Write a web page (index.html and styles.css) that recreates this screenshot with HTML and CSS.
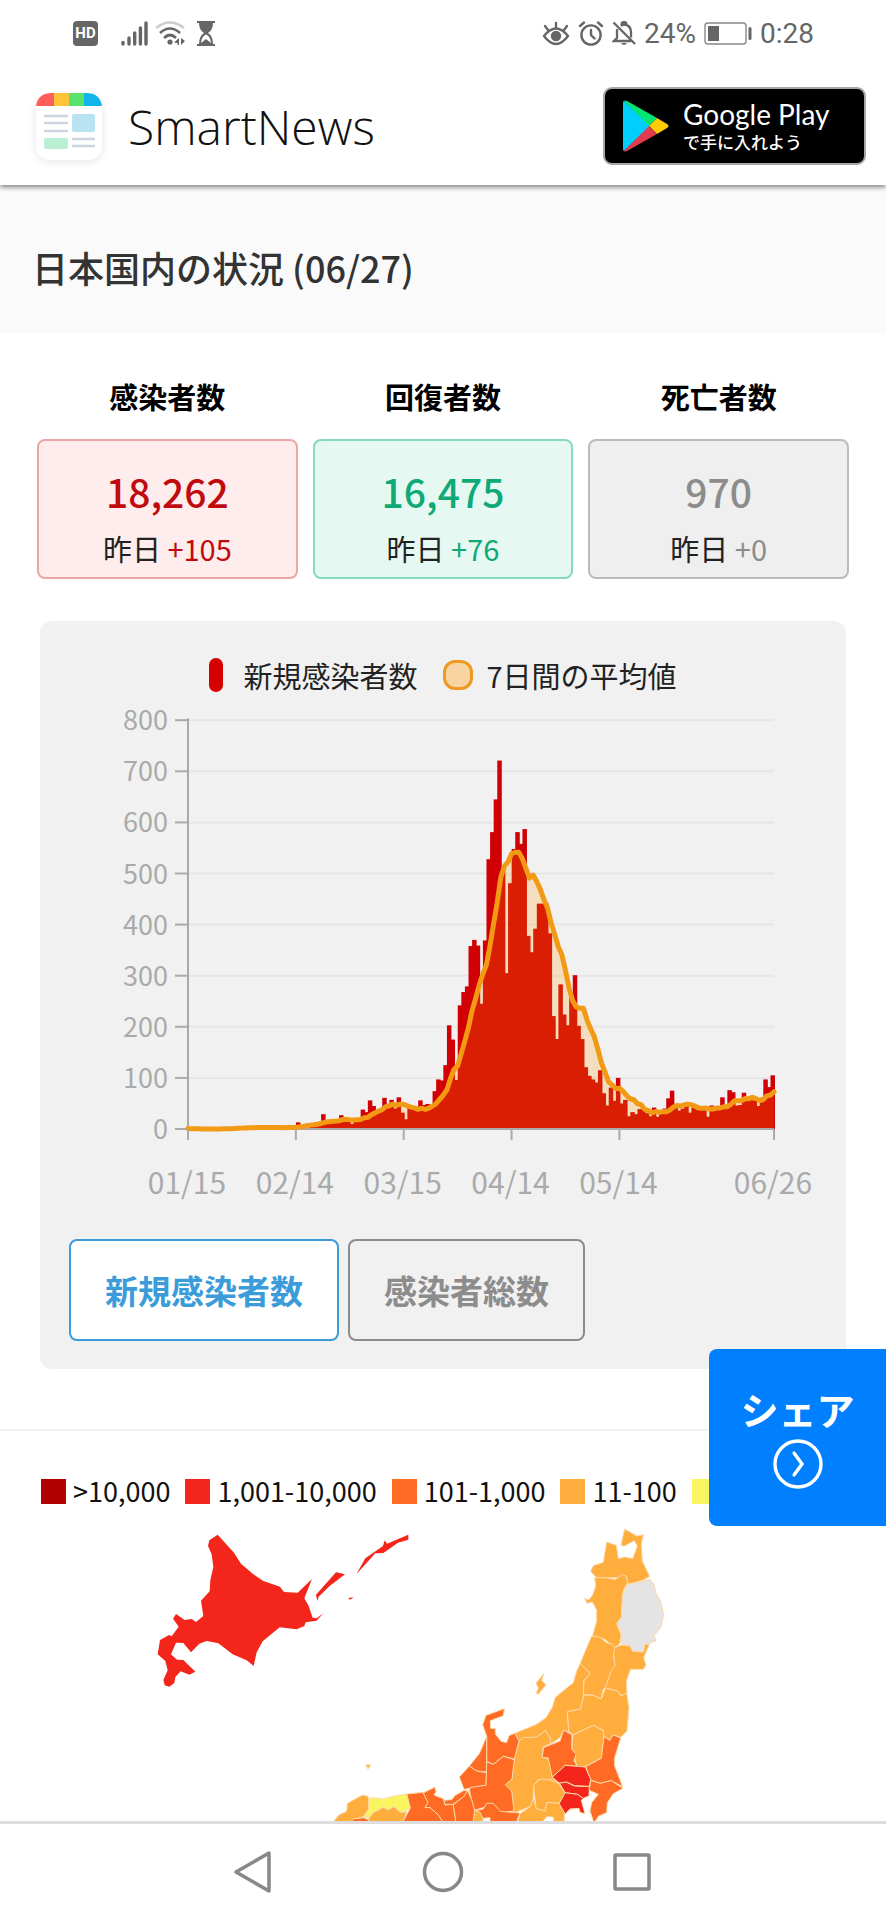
FILE: index.html
```html
<!DOCTYPE html>
<html lang="ja">
<head>
    <meta charset="UTF-8">
    <meta name="viewport" content="width=device-width, initial-scale=1.0">
    <title>SmartNews</title>
    <link rel="stylesheet" href="styles.css">
</head>
<body>
    <div class="status-bar">
        <div class="status-left">
            <span class="hd-icon">HD</span>
            <svg width="27" height="25" viewBox="0 0 27 25" stroke="#666" stroke-width="3.4" stroke-linecap="round">
                <path d="M2 21.5V23M8 17V23M13.7 12V23M19.4 7V23M25 2V23"/>
            </svg>
            <svg class="wifi" width="30" height="25" viewBox="0 0 30 25" fill="none" stroke="#666" stroke-width="2.6">
                <path stroke="#ccc" d="M1 7Q15-4 29 7"/>
                <path d="M5 12Q15 3 25 12M9 17Q15 11 21 17"/>
                <circle cx="15" cy="21" r="2.6" fill="#666" stroke="none"/>
                <path fill="#666" stroke="none" d="M24 17v7h-1.500v-2l-3.500-.5zM26 17v7l4-4z"/>
            </svg>
            <svg class="hourglass" width="20" height="25" viewBox="0 0 20 25">
                <path fill="#666" d="M1 0h18v2h-2q0 7-5 10q5 3 5 11h2v2H1v-2h2q0-8 5-11Q3 9 3 2H1z"/>
                <path fill="#fff" d="M10 13.500q4.500 2 5 8.500l-5-4-5 4q.5-6.500 5-8.500z"/>
            </svg>
        </div>
        <div class="status-right">
            <svg width="28" height="25" viewBox="0 0 28 25" fill="none" stroke="#666" stroke-width="2.400" stroke-linecap="round">
                <path d="M2 15Q14 0 26 15Q14 31 2 15zM14 2v4M3 5l3 4M25 5l-3 4"/>
                <circle cx="14" cy="15" r="4" fill="#666"/>
            </svg>
            <svg width="26" height="25" viewBox="0 0 26 25" fill="none" stroke="#666" stroke-width="2.400" stroke-linecap="round">
                <circle cx="13" cy="14" r="9.600"/>
                <path d="M13 9v5l3.500 3.500M2 5l4-3.500M24 5l-4-3.500"/>
            </svg>
            <svg width="24" height="25" viewBox="0 0 24 25" fill="none" stroke="#666" stroke-width="2.300">
                <path d="M1.500 1.500L23 23M5 8v9l-3 3h17M9 5q1.500-1.500 3-1.500 6.500.500 7 7v6M9.500 4q0-3 2.500-3t2.500 3"/>
                <path fill="#666" stroke="none" d="M9 22h6q-3 4-6 0z"/>
            </svg>
            <span>24%</span>
            <svg class="battery" width="48" height="23" viewBox="0 0 48 23">
                <rect x="1" y="1" width="41" height="21" rx="3" fill="none" stroke="#888" stroke-width="1.400"/>
                <path fill="#666" d="M4 4h11v15H4z"/>
                <rect x="44.500" y="5" width="3" height="13" rx="1.500" fill="#666"/>
            </svg>
            <span>0:28</span>
        </div>
    </div>

    <header class="site-header">
        <a href="#" class="brand">
            <span class="brand-icon">
                <svg width="66" height="67" viewBox="0 0 66 67">
                    <path fill="#ff5c5c" d="M18 0v13H0Q2 0 16 0z"/>
                    <path fill="#ffc43a" d="M18 0h15v13H18z"/>
                    <path fill="#57e36c" d="M33 0h15v13H33z"/>
                    <path fill="#12b5ea" d="M48 0h2q14 0 16 13H48z"/>
                    <path stroke="#ccd5dd" stroke-width="2.400" d="M8 23h24M8 30h24M8 38h24M36 46h23M36 53h23"/>
                    <rect x="36" y="21" width="23" height="18" rx="2" fill="#b9e3f2"/>
                    <rect x="8" y="45" width="24" height="11" rx="2" fill="#b9efd2"/>
                </svg>
            </span>
            <span class="brand-name">SmartNews</span>
        </a>
        <a href="#" class="play-badge">
            <svg width="46" height="52" viewBox="0 0 46 52">
                <path fill="#00cffd" d="M1 1Q0 1 0 3v46q0 2 1 2l26-25z"/>
                <path fill="#00e573" d="M1 1q1-1 3 0l30 17-8 8z"/>
                <path fill="#ffcc05" d="M34 18l10 6q3 2 0 4l-10 6-8-8z"/>
                <path fill="#e03b4e" d="M1 51l25-25 8 8L4 51q-2 1-3 0z"/>
            </svg>
            <span class="play-text">
                <span class="play-name">Google Play</span>
                <span class="play-sub">で手に入れよう</span>
            </span>
        </a>
    </header>

    <main>
        <h1 class="page-title">日本国内の状況 (06/27)</h1>

        <section class="stats">
            <div class="stat infected">
                <h2>感染者数</h2>
                <div class="stat-box">
                    <strong>18,262</strong>
                    <p>昨日 <span>+105</span></p>
                </div>
            </div>
            <div class="stat recovered">
                <h2>回復者数</h2>
                <div class="stat-box">
                    <strong>16,475</strong>
                    <p>昨日 <span>+76</span></p>
                </div>
            </div>
            <div class="stat deaths">
                <h2>死亡者数</h2>
                <div class="stat-box">
                    <strong>970</strong>
                    <p>昨日 <span>+0</span></p>
                </div>
            </div>
        </section>

        <section class="chart-card">
            <div class="chart-legend">
                <span class="key-bar"></span>
                <span class="key-label">新規感染者数</span>
                <span class="key-line"></span>
                <span>7日間の平均値</span>
            </div>
            <svg class="chart" id="chart" viewBox="0 0 806 510"></svg>
            <div class="chart-tabs">
                <button class="tab-btn active">新規感染者数</button>
                <button class="tab-btn">感染者総数</button>
            </div>
        </section>

        <section class="map-section">
            <ul class="map-legend">
                <li class="level-5">&gt;10,000</li>
                <li class="level-4">1,001-10,000</li>
                <li class="level-3">101-1,000</li>
                <li class="level-2">11-100</li>
                <li class="level-1">1-10</li>
            </ul>
            <svg class="map" viewBox="0 0 2658 930">
                <!-- Hokkaido and the islands -->
                <g class="area-4" transform="translate(420 0)">
                    <path d="M233 71L282 125L303 158L340 190L370 210L420 227L432 243L473 245L516 204L493 262L506 285L518 320L530 322L550 307L530 329L497 334L493 345L470 355L419 349L368 391L350 424L341 465L320 448L278 430L235 397L200 390L178 398L153 424L130 396L108 395L93 430L111 446L130 447L166 482L148 491L122 481L106 498L103 516L88 527L74 523L70 507L83 478L76 450L53 430L60 387L87 372L95 376L116 347L99 323L108 309L134 327L155 324L168 333L190 315L183 269L209 241L211 207L220 168L215 130L204 105L208 88z"/>
                    <path d="M528 251L588 184L615 190L568 226L536 257L532 270zM649 190L676 142L729 105L734 88L741 98L805 71V86L774 95L730 126L706 127zM624 261L641 259L630 266z"/>
                </g>
                <g transform="translate(960 0)">
                    <!-- Tohoku -->
                    <path class="area-2" d="M860 93L889 103L895 143L913 138L938 143L952 105L943 89L912 106L903 102L914 54L950 75L970 71L964 100L967 150L989 196L970 207L925 220L918 195L900 199L880 200L830 201L812 181L820 164L850 154z"/>
                    <path class="area-2" d="M824 200L860 201L886 205L907 191L918 195L923 216L910 238L904 320L890 338L903 370L900 397L885 410L855 385L818 374L830 330V297L817 273L801 277L794 262L806 267L818 252L827 225z"/>
                    <path class="area-0" d="M920 221L967 211L989 205L1002 220L1008 248L1022 270L1031 312L1022 350L1002 374L1008 389L973 402L969 423L938 422L930 404L905 399V365L891 337L904 319L907 255z"/>
                    <path class="area-2" d="M815 375L840 379L860 395L878 400L887 412L880 434L886 464L870 490L865 525L850 534L843 563L820 553L789 550L792 509L810 488L781 456L800 410z"/>
                    <path class="area-2" d="M885 410L903 402L930 405L938 421L970 423L975 400L988 399L971 441L978 461L970 475L932 475L919 510L921 545L903 555L894 541L856 531L873 480L885 465L881 430z"/>
                    <path class="area-2" d="M792 552L820 553L844 564L856 531L894 541L903 555L920 545L927 590L921 660L902 679L880 672L869 688L850 675L851 659L820 643L759 671L745 660L742 602L781 594z"/>
                    <path class="area-2" d="M781 457L810 488L791 509V552L781 594L742 602L746 662L759 672L731 657L720 680L692 699L691 682L676 659L650 678L609 684L597 690L584 667L650 640L678 620L697 589L706 559L760 515L770 480z"/>
                    <path class="area-2" d="M672 487L665 509L678 521L655 550L649 547L655 531L648 517z"/>
                    <!-- Kanto -->
                    <path class="area-2" d="M759 672L820 643L850 659L852 690L844 740L800 765L771 768L756 714z"/>
                    <path class="area-3" d="M731 657L756 672L755 714L768 730L762 748L771 766L736 763L697 799L685 760V741L667 739L670 710L720 690z"/>
                    <path class="area-3" d="M852 677L869 688L880 672L902 681L884 740V765L908 827L874 809L840 817L812 807L797 767L844 742z"/>
                    <path class="area-4" d="M736 763L796 768L812 805L808 826L763 824L740 813L718 816L697 799z"/>
                    <path class="area-4" d="M718 816L740 814L763 825L808 827L807 855L790 862L772 850L735 845z"/>
                    <path class="area-4" d="M735 845L772 850L790 862L784 868L795 908L780 904L777 892L750 894L735 910L717 878z"/>
                    <path class="area-3" d="M812 808L840 817L874 809L909 832L880 848L862 875L860 905L836 915L822 936L810 900L815 875L835 850L808 838z"/>
                    <!-- Chubu -->
                    <path class="area-2" d="M597 690L609 680L650 678L676 659L692 684L691 698L669 708L667 739L685 743L697 800L716 818L690 806L655 806L641 823L639 866L632 886L582 906L575 840L556 821L576 804L583 744z"/>
                    <path class="area-2" d="M641 823L660 804L690 806L717 818L735 845L717 877L681 874L675 901L648 893z"/>
                    <path class="area-2" d="M600 908L632 886L641 862L648 893L675 901L681 874L717 877L733 905V936H702L700 918L680 917L665 936H592z"/>
                    <path class="area-3" d="M553 593L550 614L511 629L512 652L526 653V669L543 691L560 695L567 674L584 667L597 690L583 744L550 736L520 760L500 751V676L488 641L498 613z"/>
                    <path class="area-3" d="M500 676V783L470 780L448 765L478 728z"/>
                    <path class="area-3" d="M448 765L470 780L500 785L498 823L432 835L418 798z"/>
                    <path class="area-3" d="M500 752L520 760L550 736L583 746L576 804L556 821L575 840L582 900L542 905L517 876L490 890L462 898L448 837L452 829L498 823z"/>
                    <path class="area-3" d="M462 900L490 894L500 877L519 877L542 901L600 906L588 936H510V920L488 922z"/>
                    <path class="area-2" d="M463 897L480 904L490 925L484 936H459z"/>
                    <path class="area-3" d="M442 837L455 866L464 898L459 936H408L403 905L399 882L420 865z"/>
                    <!-- Kinki -->
                    <path class="area-3" d="M432 838L442 840L430 858L399 880L374 880L372 868L396 866L403 855z"/>
                    <path class="area-3" d="M345 828L348 842L342 852L370 863L375 882L399 880L408 936H370L355 912L330 890L315 889L323 875L309 846z"/>
                    <path class="area-3" d="M260 849L309 844L324 875L315 889L330 890L356 913L370 936H246L270 893z"/>
                    <!-- Chugoku -->
                    <path class="area-1" d="M145 863L160 860L190 864L224 855L260 849L271 891L244 905L220 886L205 897L190 889L160 905L145 921L130 917L146 894z"/>
                    <path class="area-2" d="M145 936L147 921L160 905L190 889L205 897L220 887L244 905L260 902L248 936z"/>
                    <path class="area-2" d="M128 852L145 856L146 894L130 917L100 926L90 936H36L58 911L80 901L82 877z"/>
                    <path class="area-3" d="M90 936L100 924L130 920L145 926V936z"/>
                    <path class="area-2" d="M137 761L152 762L144 774z"/>
                </g>
            </svg>
        </section>

        <button class="share-btn">
            シェア
            <svg width="50" height="50" viewBox="0 0 50 50" fill="none" stroke="#fff" stroke-width="3.400" stroke-linecap="round">
                <circle cx="25" cy="25" r="23"/>
                <path d="M21 14l8 11-8 11"/>
            </svg>
        </button>
    </main>

    <nav class="nav-bar">
        <button aria-label="戻る">
            <svg width="42" height="44" viewBox="0 0 42 44"><path d="M36 3v38L3 22z"/></svg>
        </button>
        <button aria-label="ホーム">
            <svg width="42" height="44" viewBox="0 0 42 44"><circle cx="21" cy="22" r="18.500"/></svg>
        </button>
        <button aria-label="履歴">
            <svg width="42" height="44" viewBox="0 0 42 44"><rect x="4" y="5" width="34" height="34" rx="1"/></svg>
        </button>
    </nav>

    <script src="chart.js"></script>
</body>
</html>
```
FILE: styles.css
```css
:root {
    --status-color: #666;
    --card-bg: #f1f1f1;
    --infected: #c00a0e;
    --recovered: #0fa978;
    --muted: #8c8c8c;
    --blue: #3b9cd9;
    --share-blue: #007fff;
    --level-5: #b10000;
    --level-4: #f4261b;
    --level-3: #ff6a24;
    --level-2: #ffad3d;
    --level-1: #f9f561;
    --level-0: #e4e4e4;
}

* {
    margin: 0;
    padding: 0;
    box-sizing: border-box;
}

body {
    height: 100vh;
    display: flex;
    flex-direction: column;
    overflow: hidden;
    background-color: #fff;
    color: #222;
    font-family: 'Noto Sans CJK JP', sans-serif;
}

button {
    border: none;
    background: none;
    font-family: inherit;
    cursor: pointer;
}

a {
    color: inherit;
    text-decoration: none;
}

/* Status bar */
.status-bar {
    flex: none;
    height: 67px;
    padding: 0 72px 0 73px;
    display: flex;
    justify-content: space-between;
    align-items: center;
    color: var(--status-color);
    font-family: Roboto, sans-serif;
    font-size: 28px;
}

.status-left,
.status-right {
    display: flex;
    align-items: center;
}

.status-right {
    gap: 8px;
}

.hd-icon {
    width: 25px;
    height: 25px;
    margin-right: 23px;
    border-radius: 4px;
    background-color: var(--status-color);
    color: #fff;
    font-size: 15px;
    font-weight: bold;
    line-height: 25px;
    text-align: center;
}

.wifi {
    margin-left: 7px;
}

.hourglass {
    margin-left: 11px;
}

/* Header */
.site-header {
    flex: none;
    height: 118px;
    padding: 0 20px 0 36px;
    display: flex;
    justify-content: space-between;
    align-items: center;
    background-color: #fff;
    box-shadow: 0 2px 5px rgba(0, 0, 0, 0.5);
    z-index: 1;
    clip-path: inset(0 0 -10px 0);
}

.brand {
    display: flex;
    align-items: center;
    gap: 26px;
}

.brand-icon {
    height: 67px;
    border-radius: 14px;
    box-shadow: 0 2px 8px rgba(0, 0, 0, 0.1);
}

.brand-name {
    color: #111;
    font-family: 'Open Sans', sans-serif;
    font-size: 48px;
    font-weight: 300;
}

.play-badge {
    width: 263px;
    height: 78px;
    padding-left: 18px;
    display: flex;
    align-items: center;
    gap: 14px;
    border: 2px solid #a6a6a6;
    border-radius: 9px;
    background-color: #000;
    color: #fff;
}

.play-text {
    display: flex;
    flex-direction: column;
}

.play-name {
    font-family: Lato, sans-serif;
    font-size: 28px;
    line-height: 32px;
}

.play-sub {
    font-size: 17px;
    font-weight: 500;
    line-height: 24px;
}

main {
    position: relative;
    flex: 1;
    min-height: 0;
    overflow: hidden;
}

.page-title {
    padding: 56px 32px 39px;
    background-color: #fafafa;
    color: #333;
    font-size: 36px;
    font-weight: 500;
    line-height: 53px;
}

/* Stats */
.stats {
    padding: 38px 37px 42px;
    display: flex;
    gap: 15px;
}

.stat {
    flex: 1;
    text-align: center;
}

.stat h2 {
    margin-bottom: 18px;
    color: #000;
    font-size: 29px;
    font-weight: 700;
    line-height: 50px;
}

.stat-box {
    height: 140px;
    padding-top: 22px;
    border: 2px solid;
    border-radius: 8px;
}

.stat-box strong {
    display: block;
    font-size: 39px;
    font-weight: 500;
    line-height: 56px;
}

.stat-box p {
    color: #222;
    font-size: 29px;
    line-height: 58px;
}

.infected .stat-box {
    border-color: #eda5a7;
    background-color: #ffecec;
}

.infected strong,
.infected span {
    color: var(--infected);
}

.recovered .stat-box {
    border-color: #85dabf;
    background-color: #e5f9f2;
}

.recovered strong,
.recovered span {
    color: var(--recovered);
}

.deaths .stat-box {
    border-color: #bbb;
    background-color: #efefef;
}

.deaths strong,
.deaths span {
    color: var(--muted);
}

/* Chart */
.chart-card {
    margin: 0 40px;
    padding: 32px 0 28px;
    border-radius: 12px;
    background-color: var(--card-bg);
}

.chart-legend {
    display: flex;
    justify-content: center;
    align-items: center;
    font-size: 29px;
    line-height: 44px;
}

.key-bar {
    width: 14px;
    height: 34px;
    margin-right: 20px;
    border-radius: 7px;
    background-color: #d60000;
}

.key-label {
    margin-right: 26px;
}

.key-line {
    width: 30px;
    height: 30px;
    margin-right: 13px;
    border: 3px solid #ee9a22;
    border-radius: 12px;
    background-color: #f8d4a3;
}

.chart {
    display: block;
    width: 100%;
}

.chart .grid {
    stroke: #e6e6e6;
    stroke-width: 2;
}

.chart .axis {
    stroke: #aaa;
    stroke-width: 2;
}

.chart .bar {
    fill: #d10005;
}

.chart .average-area {
    fill: rgba(255, 152, 0, 0.2);
}

.chart .average-line {
    fill: none;
    stroke: #f39a14;
    stroke-width: 5;
    stroke-linejoin: round;
    stroke-linecap: round;
}

.chart text {
    fill: #aaa;
}

.chart .y-label {
    font-size: 27px;
    text-anchor: end;
}

.chart .x-label {
    font-size: 30px;
    text-anchor: middle;
}

.chart-tabs {
    padding: 32px 29px 0;
    display: flex;
    gap: 9px;
}

.tab-btn {
    height: 102px;
    padding: 0 34px;
    border: 2px solid var(--muted);
    border-radius: 8px;
    color: var(--muted);
    font-size: 33px;
    font-weight: 700;
}

.tab-btn.active {
    border-color: var(--blue);
    background-color: #fff;
    color: var(--blue);
}

/* Map */
.map-section {
    margin-top: 60px;
    padding-top: 40px;
    border-top: 2px solid #f2f2f2;
}

.map-legend {
    padding-left: 41px;
    display: flex;
    gap: 15px;
    list-style: none;
    color: #111;
    font-size: 27px;
    line-height: 40px;
    white-space: nowrap;
}

.map-legend li {
    display: flex;
    align-items: center;
    gap: 7px;
}

.map-legend li::before {
    content: '';
    width: 25px;
    height: 25px;
    background-color: currentColor;
}

.map-legend .level-5::before { background-color: var(--level-5); }
.map-legend .level-4::before { background-color: var(--level-4); }
.map-legend .level-3::before { background-color: var(--level-3); }
.map-legend .level-2::before { background-color: var(--level-2); }
.map-legend .level-1::before { background-color: var(--level-1); }

.map {
    display: block;
    width: 100%;
    overflow: visible;
}

.map path {
    stroke: #fbd9a8;
    stroke-width: 3;
}

.map .area-4 path {
    stroke: none;
}

.area-4 { fill: var(--level-4); }
.area-3 { fill: var(--level-3); }
.area-2 { fill: var(--level-2); }
.area-1 { fill: var(--level-1); }
.area-0 { fill: var(--level-0); }

.share-btn {
    position: absolute;
    right: 0;
    bottom: 295px;
    width: 177px;
    height: 177px;
    padding-bottom: 8px;
    display: flex;
    flex-direction: column;
    align-items: center;
    justify-content: center;
    border-radius: 8px 0 0 8px;
    background-color: var(--share-blue);
    color: #fff;
    font-size: 38px;
    font-weight: 700;
    line-height: 60px;
}

/* Navigation bar */
.nav-bar {
    flex: none;
    height: 99px;
    padding: 0 160px;
    display: flex;
    align-items: center;
    border-top: 3px solid #ddd;
    background-color: #fff;
}

.nav-bar button {
    flex: 1;
}

.nav-bar svg {
    display: block;
    margin: 0 auto;
    fill: none;
    stroke: #888;
    stroke-width: 3.5;
    stroke-linejoin: round;
}
```
FILE: chart.js
```js
// New cases per day, 01/15 - 06/26
const cases = [
    1, 0, 0, 0, 0, 0, 0, 0, 0, 1, 1, 1, 1, 3, 2, 3, 4, 3, 2, 3,
    3, 3, 3, 2, 3, 4, 2, 1, 4, 5, 3, 13, 7, 10, 11, 9, 12, 14, 29, 13,
    15, 16, 14, 27, 20, 20, 10, 20, 18, 38, 33, 56, 45, 36, 38, 61, 48, 57, 40, 62,
    32, 19, 42, 38, 36, 56, 47, 49, 47, 74, 97, 95, 125, 203, 175, 96, 242, 268, 279, 358,
    370, 359, 245, 369, 528, 581, 645, 721, 510, 305, 481, 548, 581, 558, 587, 378, 346, 392, 441, 441,
    442, 383, 221, 176, 283, 224, 203, 265, 301, 202, 176, 121, 104, 97, 91, 115, 70, 46, 81, 55,
    100, 50, 57, 25, 33, 29, 39, 40, 31, 25, 42, 24, 35, 40, 60, 75, 45, 36, 40, 45,
    32, 42, 46, 44, 40, 24, 46, 45, 43, 62, 44, 76, 72, 46, 47, 71, 60, 62, 58, 45,
    61, 97, 82, 105
];

const left = 148;
const right = 734;
const bottom = 432;
const unit = 51.1;
const step = (right - left) / (cases.length - 1);

const xAt = day => left + day * step;
const yAt = value => bottom - value / 100 * unit;

// Trailing 7 day average
const average = cases.map((value, i) => {
    const week = cases.slice(Math.max(0, i - 6), i + 1);
    return week.reduce((a, b) => a + b, 0) / week.length;
});

let html = '';

for (let value = 0; value <= 800; value += 100) {
    const y = yAt(value);
    html += `<line class="grid" x1="${left}" x2="${right}" y1="${y}" y2="${y}"/>`;
    html += `<line class="axis" x1="${left - 13}" x2="${left}" y1="${y}" y2="${y}"/>`;
    html += `<text class="y-label" x="${left - 20}" y="${y + 10}">${value}</text>`;
}

cases.forEach((value, i) => {
    const x = Math.max(left, xAt(i) - 3.5);
    html += `<rect class="bar" x="${x}" y="${yAt(value)}" width="4.5" height="${bottom - yAt(value)}"/>`;
});

const points = average.map((value, i) => `${xAt(i)},${yAt(value)}`);
html += `<polygon class="average-area" points="${left},${bottom} ${points.join(' ')} ${right},${bottom}"/>`;
html += `<path class="axis" d="M${left} ${yAt(800) - 2}V${bottom + 10}M${left} ${bottom}H${right}"/>`;
html += `<polyline class="average-line" points="${points.join(' ')}"/>`;

const ticks = [[0, '01/15'], [30, '02/14'], [60, '03/15'], [90, '04/14'], [120, '05/14'], [163, '06/26']];
ticks.forEach(([day, label]) => {
    html += `<line class="axis" x1="${xAt(day)}" x2="${xAt(day)}" y1="${bottom}" y2="${bottom + 11}"/>`;
    html += `<text class="x-label" x="${xAt(day) - 1}" y="${bottom + 65}">${label}</text>`;
});

document.getElementById('chart').innerHTML = html;
```
